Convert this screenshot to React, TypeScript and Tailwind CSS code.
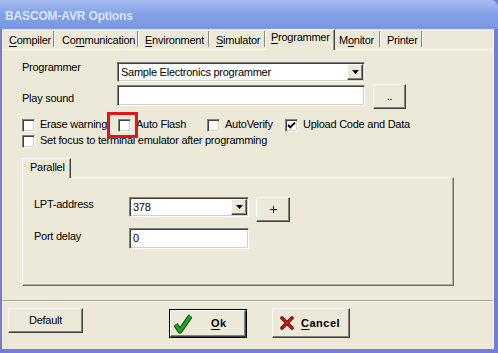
import React from "react";

const sunken =
  "border border-t-[#808080] border-l-[#808080] border-b-white border-r-white shadow-[inset_1px_1px_0_#404040,inset_-1px_-1px_0_#d4d0c8]";
const raised =
  "border border-t-white border-l-white border-b-[#404040] border-r-[#404040] shadow-[inset_-1px_-1px_0_#808080]";

function Arrow() {
  return (
    <svg width="7" height="4" viewBox="0 0 7 4">
      <path d="M0 0H7L3.5 4Z" fill="#000" />
    </svg>
  );
}

function Combo({ className, text }: { className: string; text: string }) {
  return (
    <div className={`h-[20px] bg-white flex items-center ${sunken} ${className}`}>
      <span className="flex-1 pl-[3px] leading-[13px] whitespace-nowrap overflow-hidden">{text}</span>
      <div className={`w-[16px] h-[16px] mr-[1px] bg-[#ece9d8] flex items-center justify-center ${raised}`}>
        <Arrow />
      </div>
    </div>
  );
}

function Check({ checked, label, className, children }: { checked?: boolean; label: string; className?: string; children?: React.ReactNode }) {
  return (
    <div className={`relative flex items-start shrink-0 ${className ?? ""}`}>
      <div className={`w-[13px] h-[13px] bg-white shrink-0 flex items-center justify-center ${sunken}`}>
        {checked && (
          <svg width="11" height="11" viewBox="0 0 11 11">
            <path d="M2 5L4.3 7.3L9 2.6" stroke="#000" strokeWidth="2" fill="none" />
          </svg>
        )}
      </div>
      <span className="ml-[5px] -mt-[1px] leading-[13px] whitespace-nowrap">{label}</span>
      {children}
    </div>
  );
}

function Tab({ w, pl, children }: { w: string; pl: string; children: React.ReactNode }) {
  return (
    <div className={`mt-[2px] h-[16px] pt-[3px] leading-[13px] border-r border-r-[#8c8a80] shadow-[1px_0_0_#ffffff] whitespace-nowrap ${w} ${pl}`}>
      {children}
    </div>
  );
}

export default function App() {
  return (
    <div className="w-[498px] h-[353px] flex flex-col bg-[#737dd6] font-['Liberation_Sans',Arial,sans-serif] text-[11px] tracking-[-0.25px] text-black overflow-hidden select-none">
      {/* Title bar */}
      <div className="h-[29px] shrink-0 bg-gradient-to-b from-[#a7bdf1] via-[#83a0e7] to-[#7b96e1] pl-[5px] pt-[9px] rounded-tr-[7px]">
        <span className="block text-[12px] leading-[15px] font-bold tracking-[-0.15px] text-[#dce6f9]">BASCOM-AVR Options</span>
      </div>

      {/* Body */}
      <div className="flex-1 ml-[2px] mr-[4px] mb-[4px] bg-[#ece9d8] border-r border-r-[#f7f6f0] flex flex-col">
        {/* Tabs */}
        <div className="h-[20px] shrink-0 flex pl-[1px]">
          <Tab w="w-[51px]" pl="pl-[6px]"><span className="underline underline-offset-2">C</span>ompiler</Tab>
          <Tab w="w-[84px]" pl="pl-[8px]">Co<span className="underline underline-offset-2">m</span>munication</Tab>
          <Tab w="w-[71px]" pl="pl-[7px]"><span className="underline underline-offset-2">E</span>nvironment</Tab>
          <Tab w="w-[56px]" pl="pl-[7px]"><span className="underline underline-offset-2">S</span>imulator</Tab>
          <div className="relative z-10 w-[70px] h-[21px] pl-[5px] pt-[1px] leading-[13px] bg-[#ece9d8] border-t border-l border-r border-t-white border-l-white border-r-[#404040] shadow-[inset_-1px_0_0_#9d9a8c] whitespace-nowrap">
            <span className="underline underline-offset-2">P</span>rogrammer
          </div>
          <Tab w="w-[45px]" pl="pl-[4px]">M<span className="underline underline-offset-2">o</span>nitor</Tab>
          <Tab w="w-[42px]" pl="pl-[7px]">Printer</Tab>
        </div>

        {/* Page */}
        <div className="h-[251px] shrink-0 border-t border-t-white pl-[20px] flex flex-col">
          {/* Programmer row */}
          <div className="mt-[12px] h-[20px] flex items-start">
            <span className="w-[95px] -mt-[1px] leading-[13px]">Programmer</span>
            <Combo className="w-[248px]" text="Sample Electronics programmer" />
          </div>
          {/* Play sound row */}
          <div className="mt-[2px] h-[25px] flex items-start">
            <span className="w-[95px] mt-[8px] leading-[13px]">Play sound</span>
            <div className={`w-[248px] h-[21px] mt-[1px] bg-white ${sunken}`} />
            <div className={`ml-[8px] w-[33px] h-[25px] bg-[#ece9d8] flex items-center justify-center ${raised}`}>
              <span className="leading-[13px]">..</span>
            </div>
          </div>
          {/* Checkbox row 1 */}
          <div className="mt-[10px] h-[13px] flex">
            <Check label="Erase warning" className="w-[96px]" />
            <Check label="Auto Flash" className="w-[89px] z-10">
              <div className="absolute -left-[11px] -top-[7px] w-[31px] h-[26px] border-[3px] border-[#e3141b]" />
            </Check>
            <Check label="AutoVerify" className="w-[78px]" />
            <Check label="Upload Code and Data" checked />
          </div>
          {/* Checkbox row 2 */}
          <div className="mt-[3px] h-[13px] flex">
            <Check label="Set focus to terminal emulator after programming" />
          </div>

          {/* Parallel group */}
          <div className="mt-[10px] flex flex-col">
            <div className="relative z-10 w-[49px] h-[20px] pl-[7px] pt-[2px] leading-[13px] bg-[#ece9d8] border-t border-l border-r border-t-white border-l-white border-r-[#404040] shadow-[inset_-1px_0_0_#9d9a8c]">
              Parallel
            </div>
            <div className="-mt-[1px] w-[432px] h-[109px] border border-t-white border-l-white border-r-[#716f64] border-b-[#716f64] shadow-[inset_-1px_-1px_0_#aca899] pl-[11px] flex flex-col">
              <div className="mt-[19px] h-[25px] flex items-start">
                <span className="w-[95px] mt-[1px] leading-[13px]">LPT-address</span>
                <Combo className="w-[120px]" text="378" />
                <div className={`ml-[7px] w-[34px] h-[25px] bg-[#ece9d8] flex items-center justify-center ${raised}`}>
                  <svg width="7" height="7" viewBox="0 0 7 7">
                    <path d="M3 0h1v7H3zM0 3h7v1H0z" fill="#000" />
                  </svg>
                </div>
              </div>
              <div className="mt-[6px] h-[21px] flex items-start">
                <span className="w-[95px] mt-[2px] leading-[13px]">Port delay</span>
                <div className={`w-[120px] h-[21px] bg-white pl-[3px] pt-[3px] leading-[13px] ${sunken}`}>0</div>
              </div>
            </div>
          </div>
        </div>

        {/* Separator */}
        <div className="h-[2px] shrink-0 border-t border-t-[#aca899] border-b border-b-white" />

        {/* Buttons */}
        <div className="flex-1 flex items-start">
          <div className={`ml-[6px] mt-[6px] w-[75px] h-[25px] bg-[#ece9d8] flex items-center justify-center ${raised}`}>
            <span className="leading-[13px]">Default</span>
          </div>
          <div className="ml-[86px] mt-[7px] w-[78px] h-[29px] border border-black">
            <div className={`w-full h-full bg-[#ece9d8] flex items-center pl-[3px] ${raised}`}>
              <svg width="18" height="20" viewBox="0 0 18 20">
                <polyline points="1.5,10.5 6,17 16.5,2" fill="none" stroke="#0d4f0d" strokeWidth="5" strokeLinejoin="round" />
                <polyline points="1.5,10.5 6,17 16.5,2" fill="none" stroke="#23a523" strokeWidth="3" strokeLinejoin="round" />
              </svg>
              <span className="ml-[19px] font-bold tracking-[0.5px] leading-[13px]">
                <span className="underline underline-offset-2">O</span>k
              </span>
            </div>
          </div>
          <div className={`ml-[25px] mt-[6px] w-[78px] h-[30px] bg-[#ece9d8] flex items-center pl-[7px] ${raised}`}>
            <svg width="14" height="14" viewBox="0 0 14 14">
              <path d="M2 2L12 12M12 2L2 12" stroke="#7d0f0f" strokeWidth="3.6" strokeLinecap="round" />
              <path d="M2.5 2.5L11.5 11.5M11.5 2.5L2.5 11.5" stroke="#c42020" strokeWidth="1.6" strokeLinecap="round" />
            </svg>
            <span className="ml-[7px] font-bold tracking-[0.5px] leading-[13px]">
              <span className="underline underline-offset-2">C</span>ancel
            </span>
          </div>
        </div>
      </div>
    </div>
  );
}
